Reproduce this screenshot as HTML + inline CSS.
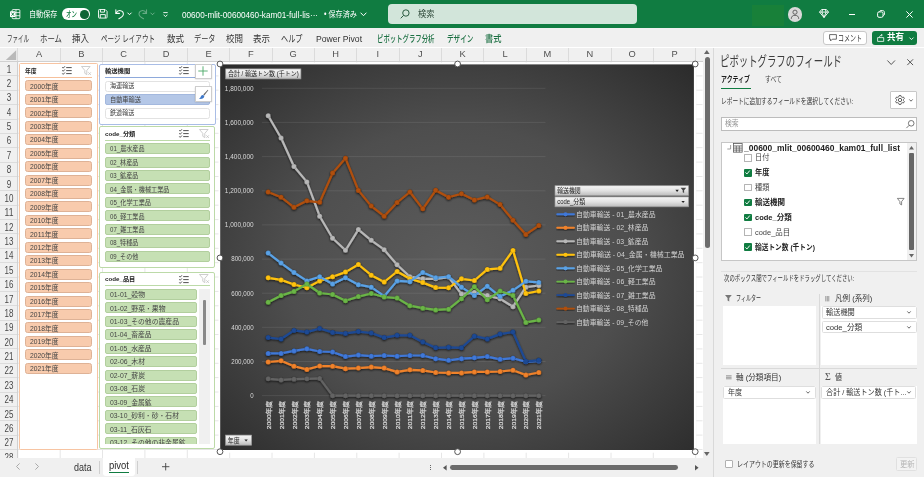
<!DOCTYPE html>
<html lang="ja"><head><meta charset="utf-8"><title>Excel</title><style>
html,body{margin:0;padding:0}
body{width:924px;height:477px;overflow:hidden;background:#fff;font-family:"Liberation Sans","Noto Sans CJK JP",sans-serif;position:relative}
.t{position:absolute;white-space:nowrap;transform-origin:0 50%}
.root{position:absolute;left:0;top:0;width:924px;height:477px;overflow:hidden;will-change:transform}
.b{position:absolute;box-sizing:border-box}
svg{position:absolute;overflow:visible}
</style></head>
<body>
<div class="root">
<div class="b" style="left:0.0px;top:0.0px;width:924.0px;height:28.4px;background:#107c41"></div>
<svg style="left:9.500px;top:9px" width="10.300" height="10.300" viewBox="0 0 12 12"><rect x="2.5" y="0.7" width="9" height="10.6" rx="1" fill="none" stroke="#fff" stroke-width="1"/><path d="M7 .7v10.6M2.5 4.2h9M2.5 7.8h9" stroke="#fff" stroke-width=".9" fill="none"/><rect x="0" y="2.6" width="6.4" height="6.8" rx=".8" fill="#fff"/><path d="M1.7 4.2l3 3.6M4.7 4.2l-3 3.6" stroke="#107c41" stroke-width="1.1" fill="none"/></svg>
<span class="t" style="left:29.0px;top:8.0px;font-size:8.5px;line-height:12px;color:#fff;transform:scaleX(0.838);">自動保存</span>
<div class="b" style="left:61.7px;top:8.4px;width:28.3px;height:11.6px;background:#fff;border-radius:6px"></div>
<span class="t" style="left:65.8px;top:8.7px;font-size:8px;line-height:11px;color:#107c41;font-weight:500;transform:scaleX(0.688);">オン</span>
<div class="b" style="left:80.2px;top:10.0px;width:8.5px;height:8.5px;background:#0e6535;border-radius:50%"></div>
<svg style="left:97.600px;top:9.300px" width="9.600" height="9.600" viewBox="0 0 11 11" fill="none" stroke="#fff" stroke-width="1.050"><path d="M.6 1.6a1 1 0 0 1 1-1h6.6l2.2 2.2v6.6a1 1 0 0 1-1 1H1.6a1 1 0 0 1-1-1z"/><path d="M2.8.8v2.8h4.6V.8M2.6 10.3V6.4h5.8v3.9"/></svg>
<svg style="left:114.800px;top:8.900px" width="9.400" height="10.300" viewBox="0 0 11 12" fill="none" stroke="#fff" stroke-width="1.200" stroke-linecap="round" stroke-linejoin="round"><path d="M1 .9v4.2h4.2"/><path d="M1.2 5C2.3 2.6 4.4 1.6 6.4 1.9c2.2.4 3.5 2.2 3.4 4.2-.1 2.300-2.500 3.800-5.300 5.200"/></svg>
<svg style="left:127px;top:11.800px" width="5" height="4" viewBox="0 0 5 4" fill="none" stroke="#fff" stroke-width="1"><path d="M.5.7l2 2 2-2"/></svg>
<svg style="left:137.800px;top:8.900px;opacity:.36" width="9.400" height="10.300" viewBox="0 0 11 12" fill="none" stroke="#fff" stroke-width="1.200" stroke-linecap="round" stroke-linejoin="round"><path d="M10 .9v4.2H5.800"/><path d="M9.800 5C8.700 2.600 6.600 1.600 4.600 1.900 2.400 2.300 1.100 4.100 1.200 6.100c.1 2.300 2.500 3.800 5.300 5.200"/></svg>
<svg style="left:150.200px;top:11.800px;opacity:.36" width="5" height="4" viewBox="0 0 5 4" fill="none" stroke="#fff" stroke-width="1"><path d="M.5.700l2 2 2-2"/></svg>
<svg style="left:162.500px;top:11.800px" width="5" height="6" viewBox="0 0 5 6" fill="none" stroke="#fff" stroke-width=".9"><path d="M.3.600h4.400M.6 2.700l1.900 2 1.900-2"/></svg>
<span class="t" style="left:182.0px;top:7.5px;font-size:9.5px;line-height:13px;color:#fff;transform:scaleX(0.859);">00600-mlit-00600460-kam01-full-lis···</span>
<span class="t" style="left:324.0px;top:8.0px;font-size:8.5px;line-height:12px;color:#fff;transform:scaleX(0.839);">• 保存済み</span>
<svg style="left:359.500px;top:12px" width="7" height="5" viewBox="0 0 7 5" fill="none" stroke="#fff" stroke-width="1"><path d="M.6.700l2.900 3 2.900-3"/></svg>
<div class="b" style="left:388.2px;top:4.4px;width:248.8px;height:19.8px;background:#d2e5da;border-radius:4px"></div>
<svg style="left:399.500px;top:9px" width="10" height="10" viewBox="0 0 10 10" fill="none" stroke="#2a5a40" stroke-width="1"><circle cx="5.900" cy="4" r="3.200"/><path d="M3.600 6.400L.7 9.300"/></svg>
<span class="t" style="left:418.0px;top:7.7px;font-size:9px;line-height:13px;color:#2f4a3a;transform:scaleX(0.916);">検索</span>
<div class="b" style="left:752.0px;top:5.0px;width:31.5px;height:21.0px;background:#188039"></div>
<div class="b" style="left:787.6px;top:6.9px;width:14.8px;height:14.8px;background:#d9d9d9;border-radius:50%"></div>
<svg style="left:790px;top:9px" width="10" height="11" viewBox="0 0 10 11" fill="none" stroke="#555" stroke-width=".9"><circle cx="5" cy="3.200" r="2.100"/><path d="M1.300 9.800c0-2.300 1.400-3.500 3.700-3.500s3.700 1.200 3.700 3.500"/></svg>
<svg style="left:818.500px;top:9px" width="10" height="9" viewBox="0 0 10 9" fill="none" stroke="#fff" stroke-width=".9" stroke-linejoin="round"><path d="M2.600.5h4.800l2.100 2.600L5 8.500.5 3.100z"/><path d="M.5 3.100h9M3.600.5L2.900 3.100 5 8.500l2.100-5.400L6.400.5"/></svg>
<div class="b" style="left:848.5px;top:13.5px;width:6.5px;height:1.2px;background:#fff"></div>
<svg style="left:877px;top:10px" width="8" height="8" viewBox="0 0 8 8" fill="none" stroke="#fff" stroke-width="1"><rect x=".6" y="1.900" width="5.400" height="5.400" rx="1.400"/><path d="M2.300 1.700C2.600.9 3.200.6 4 .6h1.700c1 0 1.700.7 1.700 1.700V4c0 .8-.4 1.400-1.100 1.700"/></svg>
<svg style="left:906px;top:10.500px" width="7" height="7" viewBox="0 0 7 7" fill="none" stroke="#fff" stroke-width="1"><path d="M.4.400l6.200 6.200M6.600.4L.4 6.600"/></svg>
<div class="b" style="left:0.0px;top:28.4px;width:924.0px;height:19.1px;background:#f0f0f0"></div>
<span class="t" style="left:7.3px;top:31.5px;font-size:9.5px;line-height:13px;color:#333;transform:scaleX(0.579);">ファイル</span>
<span class="t" style="left:40.0px;top:31.5px;font-size:9.5px;line-height:13px;color:#333;transform:scaleX(0.780);">ホーム</span>
<span class="t" style="left:72.0px;top:31.5px;font-size:9.5px;line-height:13px;color:#333;transform:scaleX(0.894);">挿入</span>
<span class="t" style="left:101.0px;top:31.5px;font-size:9.5px;line-height:13px;color:#333;transform:scaleX(0.688);">ページ レイアウト</span>
<span class="t" style="left:167.0px;top:31.5px;font-size:9.5px;line-height:13px;color:#333;transform:scaleX(0.894);">数式</span>
<span class="t" style="left:194.0px;top:31.5px;font-size:9.5px;line-height:13px;color:#333;transform:scaleX(0.754);">データ</span>
<span class="t" style="left:226.0px;top:31.5px;font-size:9.5px;line-height:13px;color:#333;transform:scaleX(0.894);">校閲</span>
<span class="t" style="left:253.0px;top:31.5px;font-size:9.5px;line-height:13px;color:#333;transform:scaleX(0.894);">表示</span>
<span class="t" style="left:281.0px;top:31.5px;font-size:9.5px;line-height:13px;color:#333;transform:scaleX(0.754);">ヘルプ</span>
<span class="t" style="left:315.5px;top:31.5px;font-size:9.5px;line-height:13px;color:#333;transform:scaleX(0.908);">Power Pivot</span>
<span class="t" style="left:377.0px;top:31.5px;font-size:9.5px;line-height:13px;color:#1e7145;font-weight:500;transform:scaleX(0.672);">ピボットグラフ分析</span>
<span class="t" style="left:447.0px;top:31.5px;font-size:9.5px;line-height:13px;color:#1e7145;font-weight:500;transform:scaleX(0.697);">デザイン</span>
<span class="t" style="left:485.0px;top:31.5px;font-size:9.5px;line-height:13px;color:#1e7145;font-weight:500;transform:scaleX(0.868);">書式</span>
<div class="b" style="left:823.3px;top:30.5px;width:43.6px;height:14.5px;background:#fff;border:1px solid #c8c8c8;border-radius:3px"></div>
<svg style="left:828.500px;top:34px" width="8" height="8" viewBox="0 0 8 8" fill="none" stroke="#444" stroke-width=".8" stroke-linejoin="round"><path d="M.6.600h6.800v4.600H3.300L1.600 6.900V5.200H.6z"/></svg>
<span class="t" style="left:838.0px;top:31.8px;font-size:8.5px;line-height:12px;color:#333;transform:scaleX(0.706);">コメント</span>
<div class="b" style="left:872.0px;top:30.5px;width:45.0px;height:14.5px;background:#107c41;border-radius:3px"></div>
<svg style="left:876.500px;top:33.500px" width="8" height="8" viewBox="0 0 8 8" fill="none" stroke="#fff" stroke-width=".8" stroke-linejoin="round"><path d="M.6 3.600h4.300l1.800 0v3.800H.6z"/><path d="M2.400 3.400C2.600 1.800 3.700 1.100 5.100 1.100M4.200.3l1.100.8-1.100.9"/></svg>
<span class="t" style="left:887.0px;top:31.3px;font-size:9px;line-height:13px;color:#fff;font-weight:700;transform:scaleX(0.944);">共有</span>
<svg style="left:908.500px;top:36.500px" width="5" height="4" viewBox="0 0 5 4" fill="none" stroke="#fff" stroke-width=".9"><path d="M.5.600l2 2 2-2"/></svg>
<div class="b" style="left:0.0px;top:47.5px;width:702.5px;height:410.0px;background:#fff"></div>
<svg style="left:0;top:0" width="703" height="458" viewBox="0 0 703 458"><path d="M17.8 61.500V458M60.2 61.500V458M102.5 61.500V458M144.9 61.500V458M187.3 61.500V458M229.7 61.500V458M272.0 61.500V458M314.4 61.500V458M356.8 61.500V458M399.1 61.500V458M441.5 61.500V458M483.9 61.500V458M526.2 61.500V458M568.6 61.500V458M611.0 61.500V458M653.3 61.500V458M695.7 61.500V458M17.800 61.5H702.500M17.800 75.9H702.500M17.800 90.2H702.500M17.800 104.6H702.500M17.800 119.0H702.500M17.800 133.3H702.500M17.800 147.7H702.500M17.800 162.1H702.500M17.800 176.5H702.500M17.800 190.8H702.500M17.800 205.2H702.500M17.800 219.6H702.500M17.800 233.9H702.500M17.800 248.3H702.500M17.800 262.7H702.500M17.800 277.0H702.500M17.800 291.4H702.500M17.800 305.8H702.500M17.800 320.2H702.500M17.800 334.5H702.500M17.800 348.9H702.500M17.800 363.3H702.500M17.800 377.6H702.500M17.800 392.0H702.500M17.800 406.4H702.500M17.800 420.8H702.500M17.800 435.1H702.500M17.800 449.5H702.500" stroke="#e6e6e6" stroke-width="1" fill="none"/></svg>
<div class="b" style="left:0.0px;top:47.5px;width:702.5px;height:14.0px;background:#f0f0f0;border-bottom:1px solid #d0d0d0"></div>
<svg style="left:0;top:47.500px" width="18" height="14" viewBox="0 0 18 14"><path d="M16.200 2.200v9.800H5.800z" fill="#b9b9b9"/></svg>
<span class="t" style="left:39.0px;top:48.0px;font-size:9.3px;line-height:13px;color:#505050;transform-origin:50% 50%;transform:translateX(-50%);">A</span>
<div class="b" style="left:59.7px;top:48.0px;width:1.0px;height:13.0px;background:#dbdbdb"></div>
<span class="t" style="left:81.4px;top:48.0px;font-size:9.3px;line-height:13px;color:#505050;transform-origin:50% 50%;transform:translateX(-50%);">B</span>
<div class="b" style="left:102.0px;top:48.0px;width:1.0px;height:13.0px;background:#dbdbdb"></div>
<span class="t" style="left:123.7px;top:48.0px;font-size:9.3px;line-height:13px;color:#505050;transform-origin:50% 50%;transform:translateX(-50%);">C</span>
<div class="b" style="left:144.4px;top:48.0px;width:1.0px;height:13.0px;background:#dbdbdb"></div>
<span class="t" style="left:166.1px;top:48.0px;font-size:9.3px;line-height:13px;color:#505050;transform-origin:50% 50%;transform:translateX(-50%);">D</span>
<div class="b" style="left:186.8px;top:48.0px;width:1.0px;height:13.0px;background:#dbdbdb"></div>
<span class="t" style="left:208.5px;top:48.0px;font-size:9.3px;line-height:13px;color:#505050;transform-origin:50% 50%;transform:translateX(-50%);">E</span>
<div class="b" style="left:229.2px;top:48.0px;width:1.0px;height:13.0px;background:#dbdbdb"></div>
<span class="t" style="left:250.8px;top:48.0px;font-size:9.3px;line-height:13px;color:#505050;transform-origin:50% 50%;transform:translateX(-50%);">F</span>
<div class="b" style="left:271.5px;top:48.0px;width:1.0px;height:13.0px;background:#dbdbdb"></div>
<span class="t" style="left:293.2px;top:48.0px;font-size:9.3px;line-height:13px;color:#505050;transform-origin:50% 50%;transform:translateX(-50%);">G</span>
<div class="b" style="left:313.9px;top:48.0px;width:1.0px;height:13.0px;background:#dbdbdb"></div>
<span class="t" style="left:335.6px;top:48.0px;font-size:9.3px;line-height:13px;color:#505050;transform-origin:50% 50%;transform:translateX(-50%);">H</span>
<div class="b" style="left:356.3px;top:48.0px;width:1.0px;height:13.0px;background:#dbdbdb"></div>
<span class="t" style="left:377.9px;top:48.0px;font-size:9.3px;line-height:13px;color:#505050;transform-origin:50% 50%;transform:translateX(-50%);">I</span>
<div class="b" style="left:398.6px;top:48.0px;width:1.0px;height:13.0px;background:#dbdbdb"></div>
<span class="t" style="left:420.3px;top:48.0px;font-size:9.3px;line-height:13px;color:#505050;transform-origin:50% 50%;transform:translateX(-50%);">J</span>
<div class="b" style="left:441.0px;top:48.0px;width:1.0px;height:13.0px;background:#dbdbdb"></div>
<span class="t" style="left:462.7px;top:48.0px;font-size:9.3px;line-height:13px;color:#505050;transform-origin:50% 50%;transform:translateX(-50%);">K</span>
<div class="b" style="left:483.4px;top:48.0px;width:1.0px;height:13.0px;background:#dbdbdb"></div>
<span class="t" style="left:505.1px;top:48.0px;font-size:9.3px;line-height:13px;color:#505050;transform-origin:50% 50%;transform:translateX(-50%);">L</span>
<div class="b" style="left:525.7px;top:48.0px;width:1.0px;height:13.0px;background:#dbdbdb"></div>
<span class="t" style="left:547.4px;top:48.0px;font-size:9.3px;line-height:13px;color:#505050;transform-origin:50% 50%;transform:translateX(-50%);">M</span>
<div class="b" style="left:568.1px;top:48.0px;width:1.0px;height:13.0px;background:#dbdbdb"></div>
<span class="t" style="left:589.8px;top:48.0px;font-size:9.3px;line-height:13px;color:#505050;transform-origin:50% 50%;transform:translateX(-50%);">N</span>
<div class="b" style="left:610.5px;top:48.0px;width:1.0px;height:13.0px;background:#dbdbdb"></div>
<span class="t" style="left:632.2px;top:48.0px;font-size:9.3px;line-height:13px;color:#505050;transform-origin:50% 50%;transform:translateX(-50%);">O</span>
<div class="b" style="left:652.8px;top:48.0px;width:1.0px;height:13.0px;background:#dbdbdb"></div>
<span class="t" style="left:674.5px;top:48.0px;font-size:9.3px;line-height:13px;color:#505050;transform-origin:50% 50%;transform:translateX(-50%);">P</span>
<div class="b" style="left:695.2px;top:48.0px;width:1.0px;height:13.0px;background:#dbdbdb"></div>
<div class="b" style="left:17.3px;top:48.0px;width:1.0px;height:13.0px;background:#dbdbdb"></div>
<div class="b" style="left:0.0px;top:61.5px;width:17.8px;height:396.5px;background:#f0f0f0;border-right:1px solid #d0d0d0"></div>
<span class="t" style="left:9.0px;top:62.6px;font-size:10.3px;line-height:14px;color:#484848;transform-origin:50% 50%;transform:translateX(-50%) scaleX(0.785);">1</span>
<div class="b" style="left:0.0px;top:75.4px;width:17.3px;height:1.0px;background:#dcdcdc"></div>
<span class="t" style="left:9.0px;top:77.0px;font-size:10.3px;line-height:14px;color:#484848;transform-origin:50% 50%;transform:translateX(-50%) scaleX(0.785);">2</span>
<div class="b" style="left:0.0px;top:89.7px;width:17.3px;height:1.0px;background:#dcdcdc"></div>
<span class="t" style="left:9.0px;top:91.3px;font-size:10.3px;line-height:14px;color:#484848;transform-origin:50% 50%;transform:translateX(-50%) scaleX(0.785);">3</span>
<div class="b" style="left:0.0px;top:104.1px;width:17.3px;height:1.0px;background:#dcdcdc"></div>
<span class="t" style="left:9.0px;top:105.7px;font-size:10.3px;line-height:14px;color:#484848;transform-origin:50% 50%;transform:translateX(-50%) scaleX(0.785);">4</span>
<div class="b" style="left:0.0px;top:118.5px;width:17.3px;height:1.0px;background:#dcdcdc"></div>
<span class="t" style="left:9.0px;top:120.1px;font-size:10.3px;line-height:14px;color:#484848;transform-origin:50% 50%;transform:translateX(-50%) scaleX(0.785);">5</span>
<div class="b" style="left:0.0px;top:132.8px;width:17.3px;height:1.0px;background:#dcdcdc"></div>
<span class="t" style="left:9.0px;top:134.4px;font-size:10.3px;line-height:14px;color:#484848;transform-origin:50% 50%;transform:translateX(-50%) scaleX(0.785);">6</span>
<div class="b" style="left:0.0px;top:147.2px;width:17.3px;height:1.0px;background:#dcdcdc"></div>
<span class="t" style="left:9.0px;top:148.8px;font-size:10.3px;line-height:14px;color:#484848;transform-origin:50% 50%;transform:translateX(-50%) scaleX(0.785);">7</span>
<div class="b" style="left:0.0px;top:161.6px;width:17.3px;height:1.0px;background:#dcdcdc"></div>
<span class="t" style="left:9.0px;top:163.2px;font-size:10.3px;line-height:14px;color:#484848;transform-origin:50% 50%;transform:translateX(-50%) scaleX(0.785);">8</span>
<div class="b" style="left:0.0px;top:176.0px;width:17.3px;height:1.0px;background:#dcdcdc"></div>
<span class="t" style="left:9.0px;top:177.6px;font-size:10.3px;line-height:14px;color:#484848;transform-origin:50% 50%;transform:translateX(-50%) scaleX(0.785);">9</span>
<div class="b" style="left:0.0px;top:190.3px;width:17.3px;height:1.0px;background:#dcdcdc"></div>
<span class="t" style="left:9.0px;top:191.9px;font-size:10.3px;line-height:14px;color:#484848;transform-origin:50% 50%;transform:translateX(-50%) scaleX(0.776);">10</span>
<div class="b" style="left:0.0px;top:204.7px;width:17.3px;height:1.0px;background:#dcdcdc"></div>
<span class="t" style="left:9.0px;top:206.3px;font-size:10.3px;line-height:14px;color:#484848;transform-origin:50% 50%;transform:translateX(-50%) scaleX(0.832);">11</span>
<div class="b" style="left:0.0px;top:219.1px;width:17.3px;height:1.0px;background:#dcdcdc"></div>
<span class="t" style="left:9.0px;top:220.7px;font-size:10.3px;line-height:14px;color:#484848;transform-origin:50% 50%;transform:translateX(-50%) scaleX(0.776);">12</span>
<div class="b" style="left:0.0px;top:233.4px;width:17.3px;height:1.0px;background:#dcdcdc"></div>
<span class="t" style="left:9.0px;top:235.0px;font-size:10.3px;line-height:14px;color:#484848;transform-origin:50% 50%;transform:translateX(-50%) scaleX(0.776);">13</span>
<div class="b" style="left:0.0px;top:247.8px;width:17.3px;height:1.0px;background:#dcdcdc"></div>
<span class="t" style="left:9.0px;top:249.4px;font-size:10.3px;line-height:14px;color:#484848;transform-origin:50% 50%;transform:translateX(-50%) scaleX(0.776);">14</span>
<div class="b" style="left:0.0px;top:262.2px;width:17.3px;height:1.0px;background:#dcdcdc"></div>
<span class="t" style="left:9.0px;top:263.8px;font-size:10.3px;line-height:14px;color:#484848;transform-origin:50% 50%;transform:translateX(-50%) scaleX(0.776);">15</span>
<div class="b" style="left:0.0px;top:276.5px;width:17.3px;height:1.0px;background:#dcdcdc"></div>
<span class="t" style="left:9.0px;top:278.1px;font-size:10.3px;line-height:14px;color:#484848;transform-origin:50% 50%;transform:translateX(-50%) scaleX(0.776);">16</span>
<div class="b" style="left:0.0px;top:290.9px;width:17.3px;height:1.0px;background:#dcdcdc"></div>
<span class="t" style="left:9.0px;top:292.5px;font-size:10.3px;line-height:14px;color:#484848;transform-origin:50% 50%;transform:translateX(-50%) scaleX(0.776);">17</span>
<div class="b" style="left:0.0px;top:305.3px;width:17.3px;height:1.0px;background:#dcdcdc"></div>
<span class="t" style="left:9.0px;top:306.9px;font-size:10.3px;line-height:14px;color:#484848;transform-origin:50% 50%;transform:translateX(-50%) scaleX(0.776);">18</span>
<div class="b" style="left:0.0px;top:319.7px;width:17.3px;height:1.0px;background:#dcdcdc"></div>
<span class="t" style="left:9.0px;top:321.3px;font-size:10.3px;line-height:14px;color:#484848;transform-origin:50% 50%;transform:translateX(-50%) scaleX(0.776);">19</span>
<div class="b" style="left:0.0px;top:334.0px;width:17.3px;height:1.0px;background:#dcdcdc"></div>
<span class="t" style="left:9.0px;top:335.6px;font-size:10.3px;line-height:14px;color:#484848;transform-origin:50% 50%;transform:translateX(-50%) scaleX(0.776);">20</span>
<div class="b" style="left:0.0px;top:348.4px;width:17.3px;height:1.0px;background:#dcdcdc"></div>
<span class="t" style="left:9.0px;top:350.0px;font-size:10.3px;line-height:14px;color:#484848;transform-origin:50% 50%;transform:translateX(-50%) scaleX(0.776);">21</span>
<div class="b" style="left:0.0px;top:362.8px;width:17.3px;height:1.0px;background:#dcdcdc"></div>
<span class="t" style="left:9.0px;top:364.4px;font-size:10.3px;line-height:14px;color:#484848;transform-origin:50% 50%;transform:translateX(-50%) scaleX(0.776);">22</span>
<div class="b" style="left:0.0px;top:377.1px;width:17.3px;height:1.0px;background:#dcdcdc"></div>
<span class="t" style="left:9.0px;top:378.7px;font-size:10.3px;line-height:14px;color:#484848;transform-origin:50% 50%;transform:translateX(-50%) scaleX(0.776);">23</span>
<div class="b" style="left:0.0px;top:391.5px;width:17.3px;height:1.0px;background:#dcdcdc"></div>
<span class="t" style="left:9.0px;top:393.1px;font-size:10.3px;line-height:14px;color:#484848;transform-origin:50% 50%;transform:translateX(-50%) scaleX(0.776);">24</span>
<div class="b" style="left:0.0px;top:405.9px;width:17.3px;height:1.0px;background:#dcdcdc"></div>
<span class="t" style="left:9.0px;top:407.5px;font-size:10.3px;line-height:14px;color:#484848;transform-origin:50% 50%;transform:translateX(-50%) scaleX(0.776);">25</span>
<div class="b" style="left:0.0px;top:420.2px;width:17.3px;height:1.0px;background:#dcdcdc"></div>
<span class="t" style="left:9.0px;top:421.8px;font-size:10.3px;line-height:14px;color:#484848;transform-origin:50% 50%;transform:translateX(-50%) scaleX(0.776);">26</span>
<div class="b" style="left:0.0px;top:434.6px;width:17.3px;height:1.0px;background:#dcdcdc"></div>
<span class="t" style="left:9.0px;top:436.2px;font-size:10.3px;line-height:14px;color:#484848;transform-origin:50% 50%;transform:translateX(-50%) scaleX(0.776);">27</span>
<div class="b" style="left:0.0px;top:449.0px;width:17.3px;height:1.0px;background:#dcdcdc"></div>
<div class="b" style="left:0;top:449.5px;width:17.800px;height:8.5px;overflow:hidden"><span class="t" style="left:9.0px;top:1.1px;font-size:10.3px;line-height:14px;color:#484848;transform-origin:50% 50%;transform:translateX(-50%) scaleX(0.776);">28</span></div>
<div class="b" style="left:0.0px;top:463.4px;width:17.3px;height:1.0px;background:#dcdcdc"></div>
<div class="b" style="left:19.0px;top:63.3px;width:79.0px;height:386.7px;background:#fff;border:1px solid #f7c4a2;border-radius:1.500px"></div>
<span class="t" style="left:24.8px;top:65.7px;font-size:6.1px;line-height:9px;color:#222;font-weight:700;transform:scaleX(0.960);">年度</span>
<svg style="left:61.5px;top:66.2px" width="10" height="9" viewBox="0 0 10 8.400" preserveAspectRatio="none" fill="none" stroke="#3a3a3a" stroke-width=".85"><path d="M.3 1.100l.9.900L2.900.3M.3 4l.9.900L2.900 3.200M.3 6.900l.9.900 1.700-1.700M4.200 1.500h5.500M4.200 4.300h5.500M4.200 7.100h5.500"/></svg>
<svg style="left:81.0px;top:66.0px" width="11" height="9.500" viewBox="0 0 11 9.500" fill="none" stroke="#bdbdbd" stroke-width=".75"><path d="M.5.500h8.600L5.800 4.400v4.200L3.800 7.300V4.400z"/><path d="M7.300 6.300l2.600 2.600M9.900 6.300L7.300 8.900"/></svg>
<div class="b" style="left:24.6px;top:76.8px;width:67.6px;height:1.0px;background:#f6c09b"></div>
<div class="b" style="left:24.6px;top:80.4px;width:67.6px;height:11.1px;background:#f8cbad;border:1px solid #deb296;border-radius:2.500px"></div>
<span class="t" style="left:29.7px;top:81.6px;font-size:6.7px;line-height:9px;color:#444;transform:scaleX(1.008);">2000年度</span>
<div class="b" style="left:24.6px;top:93.8px;width:67.6px;height:11.1px;background:#f8cbad;border:1px solid #deb296;border-radius:2.500px"></div>
<span class="t" style="left:29.7px;top:95.0px;font-size:6.7px;line-height:9px;color:#444;transform:scaleX(1.008);">2001年度</span>
<div class="b" style="left:24.6px;top:107.3px;width:67.6px;height:11.1px;background:#f8cbad;border:1px solid #deb296;border-radius:2.500px"></div>
<span class="t" style="left:29.7px;top:108.5px;font-size:6.7px;line-height:9px;color:#444;transform:scaleX(1.008);">2002年度</span>
<div class="b" style="left:24.6px;top:120.7px;width:67.6px;height:11.1px;background:#f8cbad;border:1px solid #deb296;border-radius:2.500px"></div>
<span class="t" style="left:29.7px;top:121.9px;font-size:6.7px;line-height:9px;color:#444;transform:scaleX(1.008);">2003年度</span>
<div class="b" style="left:24.6px;top:134.2px;width:67.6px;height:11.1px;background:#f8cbad;border:1px solid #deb296;border-radius:2.500px"></div>
<span class="t" style="left:29.7px;top:135.4px;font-size:6.7px;line-height:9px;color:#444;transform:scaleX(1.008);">2004年度</span>
<div class="b" style="left:24.6px;top:147.6px;width:67.6px;height:11.1px;background:#f8cbad;border:1px solid #deb296;border-radius:2.500px"></div>
<span class="t" style="left:29.7px;top:148.8px;font-size:6.7px;line-height:9px;color:#444;transform:scaleX(1.008);">2005年度</span>
<div class="b" style="left:24.6px;top:161.1px;width:67.6px;height:11.1px;background:#f8cbad;border:1px solid #deb296;border-radius:2.500px"></div>
<span class="t" style="left:29.7px;top:162.3px;font-size:6.7px;line-height:9px;color:#444;transform:scaleX(1.008);">2006年度</span>
<div class="b" style="left:24.6px;top:174.5px;width:67.6px;height:11.1px;background:#f8cbad;border:1px solid #deb296;border-radius:2.500px"></div>
<span class="t" style="left:29.7px;top:175.7px;font-size:6.7px;line-height:9px;color:#444;transform:scaleX(1.008);">2007年度</span>
<div class="b" style="left:24.6px;top:188.0px;width:67.6px;height:11.1px;background:#f8cbad;border:1px solid #deb296;border-radius:2.500px"></div>
<span class="t" style="left:29.7px;top:189.2px;font-size:6.7px;line-height:9px;color:#444;transform:scaleX(1.008);">2008年度</span>
<div class="b" style="left:24.6px;top:201.4px;width:67.6px;height:11.1px;background:#f8cbad;border:1px solid #deb296;border-radius:2.500px"></div>
<span class="t" style="left:29.7px;top:202.6px;font-size:6.7px;line-height:9px;color:#444;transform:scaleX(1.008);">2009年度</span>
<div class="b" style="left:24.6px;top:214.8px;width:67.6px;height:11.1px;background:#f8cbad;border:1px solid #deb296;border-radius:2.500px"></div>
<span class="t" style="left:29.7px;top:216.0px;font-size:6.7px;line-height:9px;color:#444;transform:scaleX(1.008);">2010年度</span>
<div class="b" style="left:24.6px;top:228.3px;width:67.6px;height:11.1px;background:#f8cbad;border:1px solid #deb296;border-radius:2.500px"></div>
<span class="t" style="left:29.7px;top:229.5px;font-size:6.7px;line-height:9px;color:#444;transform:scaleX(1.026);">2011年度</span>
<div class="b" style="left:24.6px;top:241.7px;width:67.6px;height:11.1px;background:#f8cbad;border:1px solid #deb296;border-radius:2.500px"></div>
<span class="t" style="left:29.7px;top:242.9px;font-size:6.7px;line-height:9px;color:#444;transform:scaleX(1.008);">2012年度</span>
<div class="b" style="left:24.6px;top:255.2px;width:67.6px;height:11.1px;background:#f8cbad;border:1px solid #deb296;border-radius:2.500px"></div>
<span class="t" style="left:29.7px;top:256.4px;font-size:6.7px;line-height:9px;color:#444;transform:scaleX(1.008);">2013年度</span>
<div class="b" style="left:24.6px;top:268.6px;width:67.6px;height:11.1px;background:#f8cbad;border:1px solid #deb296;border-radius:2.500px"></div>
<span class="t" style="left:29.7px;top:269.8px;font-size:6.7px;line-height:9px;color:#444;transform:scaleX(1.008);">2014年度</span>
<div class="b" style="left:24.6px;top:282.1px;width:67.6px;height:11.1px;background:#f8cbad;border:1px solid #deb296;border-radius:2.500px"></div>
<span class="t" style="left:29.7px;top:283.3px;font-size:6.7px;line-height:9px;color:#444;transform:scaleX(1.008);">2015年度</span>
<div class="b" style="left:24.6px;top:295.5px;width:67.6px;height:11.1px;background:#f8cbad;border:1px solid #deb296;border-radius:2.500px"></div>
<span class="t" style="left:29.7px;top:296.7px;font-size:6.7px;line-height:9px;color:#444;transform:scaleX(1.008);">2016年度</span>
<div class="b" style="left:24.6px;top:309.0px;width:67.6px;height:11.1px;background:#f8cbad;border:1px solid #deb296;border-radius:2.500px"></div>
<span class="t" style="left:29.7px;top:310.2px;font-size:6.7px;line-height:9px;color:#444;transform:scaleX(1.008);">2017年度</span>
<div class="b" style="left:24.6px;top:322.4px;width:67.6px;height:11.1px;background:#f8cbad;border:1px solid #deb296;border-radius:2.500px"></div>
<span class="t" style="left:29.7px;top:323.6px;font-size:6.7px;line-height:9px;color:#444;transform:scaleX(1.008);">2018年度</span>
<div class="b" style="left:24.6px;top:335.9px;width:67.6px;height:11.1px;background:#f8cbad;border:1px solid #deb296;border-radius:2.500px"></div>
<span class="t" style="left:29.7px;top:337.1px;font-size:6.7px;line-height:9px;color:#444;transform:scaleX(1.008);">2019年度</span>
<div class="b" style="left:24.6px;top:349.3px;width:67.6px;height:11.1px;background:#f8cbad;border:1px solid #deb296;border-radius:2.500px"></div>
<span class="t" style="left:29.7px;top:350.5px;font-size:6.7px;line-height:9px;color:#444;transform:scaleX(1.008);">2020年度</span>
<div class="b" style="left:24.6px;top:362.7px;width:67.6px;height:11.1px;background:#f8cbad;border:1px solid #deb296;border-radius:2.500px"></div>
<span class="t" style="left:29.7px;top:363.9px;font-size:6.7px;line-height:9px;color:#444;transform:scaleX(1.008);">2021年度</span>
<div class="b" style="left:99.4px;top:63.6px;width:116.4px;height:61.6px;background:#fff;border:1px solid #a9bde6;border-radius:2px"></div>
<span class="t" style="left:105.0px;top:66.1px;font-size:6.1px;line-height:9px;color:#222;font-weight:700;transform:scaleX(1.034);">輸送機関</span>
<svg style="left:179.4px;top:66.2px" width="10" height="9" viewBox="0 0 10 8.400" preserveAspectRatio="none" fill="none" stroke="#3a3a3a" stroke-width=".85"><path d="M.3 1.100l.9.900L2.900.3M.3 4l.9.900L2.900 3.200M.3 6.900l.9.900 1.700-1.700M4.200 1.500h5.500M4.200 4.300h5.500M4.200 7.100h5.500"/></svg>
<div class="b" style="left:105.0px;top:77.1px;width:105.0px;height:1.0px;background:#8ea9db"></div>
<div class="b" style="left:105.0px;top:80.8px;width:104.5px;height:11.1px;background:#fff;border:1px solid #e2e2e2;border-radius:2.500px"></div>
<span class="t" style="left:110.4px;top:81.3px;font-size:6.4px;line-height:9px;color:#444;transform:scaleX(0.958);">海運輸送</span>
<div class="b" style="left:105.0px;top:94.3px;width:104.5px;height:11.1px;background:#b4c7e7;border:1px solid #a3b8de;border-radius:2px"></div>
<span class="t" style="left:110.4px;top:94.8px;font-size:6.4px;line-height:9px;color:#444;transform:scaleX(0.964);">自動車輸送</span>
<div class="b" style="left:105.0px;top:107.7px;width:104.5px;height:11.1px;background:#fff;border:1px solid #e2e2e2;border-radius:2.500px"></div>
<span class="t" style="left:110.4px;top:108.2px;font-size:6.4px;line-height:9px;color:#444;transform:scaleX(0.958);">鉄道輸送</span>
<div class="b" style="left:195.0px;top:63.6px;width:16.5px;height:15.6px;background:#fff;border:1px solid #cdcdcd;box-shadow:0 .5px 1.500px rgba(0,0,0,.18)"></div>
<svg style="left:198.300px;top:66.400px" width="10" height="10" viewBox="0 0 10 10" fill="none" stroke="#4aa868" stroke-width=".9"><path d="M5 .3v9.400M.3 5h9.400"/></svg>
<div class="b" style="left:195.0px;top:86.0px;width:16.5px;height:16.3px;background:#fff;border:1px solid #cdcdcd;box-shadow:0 .5px 1.500px rgba(0,0,0,.18)"></div>
<svg style="left:197.700px;top:88.700px" width="11" height="11" viewBox="0 0 11 11"><path d="M9.800.8L5.300 5.600l1 .9L10.300 1.300z" fill="#6a6a6a"/><path d="M4.900 5.900C3.300 6 2.900 7.300 2.600 8.300 2.300 9 1.600 9.400.8 9.500c2.100.9 4.300.300 5.200-1.200.4-.7.400-1.300-.1-1.800z" fill="#3f78c9"/></svg>
<div class="b" style="left:99.4px;top:126.2px;width:116.0px;height:142.3px;background:#fff;border:1px solid #bcdaa8;border-radius:2px"></div>
<span class="t" style="left:105.0px;top:128.6px;font-size:6.1px;line-height:9px;color:#222;font-weight:700;transform:scaleX(1.016);">code_分類</span>
<svg style="left:179.4px;top:128.8px" width="10" height="9" viewBox="0 0 10 8.400" preserveAspectRatio="none" fill="none" stroke="#3a3a3a" stroke-width=".85"><path d="M.3 1.100l.9.900L2.900.3M.3 4l.9.900L2.900 3.200M.3 6.900l.9.900 1.700-1.700M4.200 1.500h5.500M4.200 4.300h5.500M4.200 7.100h5.500"/></svg>
<svg style="left:198.5px;top:128.6px" width="11" height="9.500" viewBox="0 0 11 9.500" fill="none" stroke="#bdbdbd" stroke-width=".75"><path d="M.5.500h8.600L5.800 4.400v4.200L3.800 7.300V4.400z"/><path d="M7.300 6.300l2.600 2.600M9.900 6.300L7.300 8.900"/></svg>
<div class="b" style="left:105.0px;top:139.5px;width:105.0px;height:1.0px;background:#bcdaa8"></div>
<div class="b" style="left:105.0px;top:143.1px;width:104.5px;height:11.1px;background:#c6e0b4;border:1px solid #b2cf9e;border-radius:2px"></div>
<span class="t" style="left:110.2px;top:144.3px;font-size:6.4px;line-height:9px;color:#444;transform:scaleX(0.952);">01_農水産品</span>
<div class="b" style="left:105.0px;top:156.5px;width:104.5px;height:11.1px;background:#c6e0b4;border:1px solid #b2cf9e;border-radius:2px"></div>
<span class="t" style="left:110.2px;top:157.7px;font-size:6.4px;line-height:9px;color:#444;transform:scaleX(0.948);">02_林産品</span>
<div class="b" style="left:105.0px;top:170.0px;width:104.5px;height:11.1px;background:#c6e0b4;border:1px solid #b2cf9e;border-radius:2px"></div>
<span class="t" style="left:110.2px;top:171.2px;font-size:6.4px;line-height:9px;color:#444;transform:scaleX(0.948);">03_鉱産品</span>
<div class="b" style="left:105.0px;top:183.4px;width:104.5px;height:11.1px;background:#c6e0b4;border:1px solid #b2cf9e;border-radius:2px"></div>
<span class="t" style="left:110.2px;top:184.6px;font-size:6.4px;line-height:9px;color:#444;transform:scaleX(0.963);">04_金属・機械工業品</span>
<div class="b" style="left:105.0px;top:196.9px;width:104.5px;height:11.1px;background:#c6e0b4;border:1px solid #b2cf9e;border-radius:2px"></div>
<span class="t" style="left:110.2px;top:198.1px;font-size:6.4px;line-height:9px;color:#444;transform:scaleX(0.962);">05_化学工業品</span>
<div class="b" style="left:105.0px;top:210.3px;width:104.5px;height:11.1px;background:#c6e0b4;border:1px solid #b2cf9e;border-radius:2px"></div>
<span class="t" style="left:110.2px;top:211.5px;font-size:6.4px;line-height:9px;color:#444;transform:scaleX(0.952);">06_軽工業品</span>
<div class="b" style="left:105.0px;top:223.7px;width:104.5px;height:11.1px;background:#c6e0b4;border:1px solid #b2cf9e;border-radius:2px"></div>
<span class="t" style="left:110.2px;top:224.9px;font-size:6.4px;line-height:9px;color:#444;transform:scaleX(0.952);">07_雑工業品</span>
<div class="b" style="left:105.0px;top:237.2px;width:104.5px;height:11.1px;background:#c6e0b4;border:1px solid #b2cf9e;border-radius:2px"></div>
<span class="t" style="left:110.2px;top:238.4px;font-size:6.4px;line-height:9px;color:#444;transform:scaleX(0.948);">08_特種品</span>
<div class="b" style="left:105.0px;top:250.6px;width:104.5px;height:11.1px;background:#c6e0b4;border:1px solid #b2cf9e;border-radius:2px"></div>
<span class="t" style="left:110.2px;top:251.8px;font-size:6.4px;line-height:9px;color:#444;transform:scaleX(0.948);">09_その他</span>
<div class="b" style="left:99.4px;top:271.7px;width:116.0px;height:177.8px;background:#fff;border:1px solid #bcdaa8;border-radius:2px"></div>
<span class="t" style="left:105.0px;top:274.4px;font-size:6.1px;line-height:9px;color:#222;font-weight:700;transform:scaleX(1.016);">code_品目</span>
<svg style="left:179.4px;top:274.5px" width="10" height="9" viewBox="0 0 10 8.400" preserveAspectRatio="none" fill="none" stroke="#3a3a3a" stroke-width=".85"><path d="M.3 1.100l.9.900L2.900.3M.3 4l.9.900L2.900 3.200M.3 6.900l.9.900 1.700-1.700M4.200 1.500h5.500M4.200 4.300h5.500M4.200 7.100h5.500"/></svg>
<svg style="left:198.5px;top:274.3px" width="11" height="9.500" viewBox="0 0 11 9.500" fill="none" stroke="#bdbdbd" stroke-width=".75"><path d="M.5.500h8.600L5.800 4.400v4.200L3.800 7.300V4.400z"/><path d="M7.300 6.300l2.600 2.600M9.900 6.300L7.300 8.900"/></svg>
<div class="b" style="left:105.0px;top:285.0px;width:105.0px;height:1.0px;background:#bcdaa8"></div>
<div class="b" style="left:105px;top:288.500px;width:92px;height:155.500px;overflow:hidden"><div class="b" style="left:0.0px;top:0.4px;width:91.5px;height:11.1px;background:#c6e0b4;border:1px solid #b2cf9e;border-radius:2px"></div><span class="t" style="left:5.2px;top:1.6px;font-size:6.4px;line-height:9px;color:#444;transform:scaleX(1.071);">01-01_穀物</span><div class="b" style="left:0.0px;top:13.8px;width:91.5px;height:11.1px;background:#c6e0b4;border:1px solid #b2cf9e;border-radius:2px"></div><span class="t" style="left:5.2px;top:15.0px;font-size:6.4px;line-height:9px;color:#444;transform:scaleX(1.070);">01-02_野菜・果物</span><div class="b" style="left:0.0px;top:27.3px;width:91.5px;height:11.1px;background:#c6e0b4;border:1px solid #b2cf9e;border-radius:2px"></div><span class="t" style="left:5.2px;top:28.5px;font-size:6.4px;line-height:9px;color:#444;transform:scaleX(1.067);">01-03_その他の農産品</span><div class="b" style="left:0.0px;top:40.7px;width:91.5px;height:11.1px;background:#c6e0b4;border:1px solid #b2cf9e;border-radius:2px"></div><span class="t" style="left:5.2px;top:41.9px;font-size:6.4px;line-height:9px;color:#444;transform:scaleX(1.062);">01-04_畜産品</span><div class="b" style="left:0.0px;top:54.2px;width:91.5px;height:11.1px;background:#c6e0b4;border:1px solid #b2cf9e;border-radius:2px"></div><span class="t" style="left:5.2px;top:55.4px;font-size:6.4px;line-height:9px;color:#444;transform:scaleX(1.062);">01-05_水産品</span><div class="b" style="left:0.0px;top:67.6px;width:91.5px;height:11.1px;background:#c6e0b4;border:1px solid #b2cf9e;border-radius:2px"></div><span class="t" style="left:5.2px;top:68.8px;font-size:6.4px;line-height:9px;color:#444;transform:scaleX(1.071);">02-06_木材</span><div class="b" style="left:0.0px;top:81.0px;width:91.5px;height:11.1px;background:#c6e0b4;border:1px solid #b2cf9e;border-radius:2px"></div><span class="t" style="left:5.2px;top:82.2px;font-size:6.4px;line-height:9px;color:#444;transform:scaleX(1.071);">02-07_薪炭</span><div class="b" style="left:0.0px;top:94.5px;width:91.5px;height:11.1px;background:#c6e0b4;border:1px solid #b2cf9e;border-radius:2px"></div><span class="t" style="left:5.2px;top:95.7px;font-size:6.4px;line-height:9px;color:#444;transform:scaleX(1.071);">03-08_石炭</span><div class="b" style="left:0.0px;top:107.9px;width:91.5px;height:11.1px;background:#c6e0b4;border:1px solid #b2cf9e;border-radius:2px"></div><span class="t" style="left:5.2px;top:109.1px;font-size:6.4px;line-height:9px;color:#444;transform:scaleX(1.062);">03-09_金属鉱</span><div class="b" style="left:0.0px;top:121.4px;width:91.5px;height:11.1px;background:#c6e0b4;border:1px solid #b2cf9e;border-radius:2px"></div><span class="t" style="left:5.2px;top:122.6px;font-size:6.4px;line-height:9px;color:#444;transform:scaleX(1.067);">03-10_砂利・砂・石材</span><div class="b" style="left:0.0px;top:134.8px;width:91.5px;height:11.1px;background:#c6e0b4;border:1px solid #b2cf9e;border-radius:2px"></div><span class="t" style="left:5.2px;top:136.0px;font-size:6.4px;line-height:9px;color:#444;transform:scaleX(1.075);">03-11_石灰石</span><div class="b" style="left:0.0px;top:148.2px;width:91.5px;height:11.1px;background:#c6e0b4;border:1px solid #b2cf9e;border-radius:2px"></div><span class="t" style="left:5.2px;top:149.4px;font-size:6.4px;line-height:9px;color:#444;transform:scaleX(1.063);">03-12_その他の非金属鉱</span></div>
<div class="b" style="left:198.8px;top:289.0px;width:10.8px;height:155.0px;background:#f0f0f0"></div>
<div class="b" style="left:202.6px;top:299.8px;width:3.7px;height:45.0px;background:#8a8a8a;border-radius:1px"></div>
<svg style="left:0;top:0;font-family:'Liberation Sans','Noto Sans CJK JP',sans-serif" width="924" height="477" viewBox="0 0 924 477"><defs><radialGradient id="cbg" cx="50%" cy="52%" r="72%"><stop offset="0" stop-color="#5c5c5c"/><stop offset=".5" stop-color="#4e4e4e"/><stop offset="1" stop-color="#2b2b2b"/></radialGradient><filter id="sh" x="-5%" y="-5%" width="110%" height="115%"><feGaussianBlur in="SourceAlpha" stdDeviation="1"/><feOffset dx="0" dy="1.200"/><feComponentTransfer><feFuncA type="linear" slope=".7"/></feComponentTransfer><feMerge><feMergeNode/><feMergeNode in="SourceGraphic"/></feMerge></filter><linearGradient id="btn" x1="0" y1="0" x2="0" y2="1"><stop offset="0" stop-color="#f6f6f6"/><stop offset=".5" stop-color="#e2e2e2"/><stop offset="1" stop-color="#bcbcbc"/></linearGradient></defs><rect x="218.5" y="62.5" width="477.7" height="390.2" fill="#fff"/><rect x="220.2" y="64.4" width="473.7" height="385.6" fill="url(#cbg)"/><path d="M262 88.3H545.500" stroke="#fff" stroke-opacity=".085" stroke-width="1"/><text x="253.600" y="90.6" font-size="6.500" fill="#d9d9d9" text-anchor="end" textLength="28.8" lengthAdjust="spacingAndGlyphs">1,800,000</text><path d="M262 122.4H545.500" stroke="#fff" stroke-opacity=".085" stroke-width="1"/><text x="253.600" y="124.7" font-size="6.500" fill="#d9d9d9" text-anchor="end" textLength="28.8" lengthAdjust="spacingAndGlyphs">1,600,000</text><path d="M262 156.6H545.500" stroke="#fff" stroke-opacity=".085" stroke-width="1"/><text x="253.600" y="158.9" font-size="6.500" fill="#d9d9d9" text-anchor="end" textLength="28.8" lengthAdjust="spacingAndGlyphs">1,400,000</text><path d="M262 190.8H545.500" stroke="#fff" stroke-opacity=".085" stroke-width="1"/><text x="253.600" y="193.1" font-size="6.500" fill="#d9d9d9" text-anchor="end" textLength="28.8" lengthAdjust="spacingAndGlyphs">1,200,000</text><path d="M262 224.9H545.500" stroke="#fff" stroke-opacity=".085" stroke-width="1"/><text x="253.600" y="227.2" font-size="6.500" fill="#d9d9d9" text-anchor="end" textLength="28.8" lengthAdjust="spacingAndGlyphs">1,000,000</text><path d="M262 259.1H545.500" stroke="#fff" stroke-opacity=".085" stroke-width="1"/><text x="253.600" y="261.4" font-size="6.500" fill="#d9d9d9" text-anchor="end" textLength="22.4" lengthAdjust="spacingAndGlyphs">800,000</text><path d="M262 293.2H545.500" stroke="#fff" stroke-opacity=".085" stroke-width="1"/><text x="253.600" y="295.5" font-size="6.500" fill="#d9d9d9" text-anchor="end" textLength="22.4" lengthAdjust="spacingAndGlyphs">600,000</text><path d="M262 327.3H545.500" stroke="#fff" stroke-opacity=".085" stroke-width="1"/><text x="253.600" y="329.6" font-size="6.500" fill="#d9d9d9" text-anchor="end" textLength="22.4" lengthAdjust="spacingAndGlyphs">400,000</text><path d="M262 361.5H545.500" stroke="#fff" stroke-opacity=".085" stroke-width="1"/><text x="253.600" y="363.8" font-size="6.500" fill="#d9d9d9" text-anchor="end" textLength="22.4" lengthAdjust="spacingAndGlyphs">200,000</text><path d="M262 395.6H545.500" stroke="#fff" stroke-opacity=".085" stroke-width="1"/><text x="253.600" y="397.9" font-size="6.500" fill="#d9d9d9" text-anchor="end" textLength="3.4" lengthAdjust="spacingAndGlyphs">0</text><text transform="translate(270.7 429.300) rotate(-90)" font-size="6.200" fill="#d9d9d9" stroke="#d9d9d9" stroke-width=".22" textLength="28.300" lengthAdjust="spacingAndGlyphs">2000年度</text><text transform="translate(283.6 429.300) rotate(-90)" font-size="6.200" fill="#d9d9d9" stroke="#d9d9d9" stroke-width=".22" textLength="28.300" lengthAdjust="spacingAndGlyphs">2001年度</text><text transform="translate(296.5 429.300) rotate(-90)" font-size="6.200" fill="#d9d9d9" stroke="#d9d9d9" stroke-width=".22" textLength="28.300" lengthAdjust="spacingAndGlyphs">2002年度</text><text transform="translate(309.4 429.300) rotate(-90)" font-size="6.200" fill="#d9d9d9" stroke="#d9d9d9" stroke-width=".22" textLength="28.300" lengthAdjust="spacingAndGlyphs">2003年度</text><text transform="translate(322.2 429.300) rotate(-90)" font-size="6.200" fill="#d9d9d9" stroke="#d9d9d9" stroke-width=".22" textLength="28.300" lengthAdjust="spacingAndGlyphs">2004年度</text><text transform="translate(335.1 429.300) rotate(-90)" font-size="6.200" fill="#d9d9d9" stroke="#d9d9d9" stroke-width=".22" textLength="28.300" lengthAdjust="spacingAndGlyphs">2005年度</text><text transform="translate(348.0 429.300) rotate(-90)" font-size="6.200" fill="#d9d9d9" stroke="#d9d9d9" stroke-width=".22" textLength="28.300" lengthAdjust="spacingAndGlyphs">2006年度</text><text transform="translate(360.9 429.300) rotate(-90)" font-size="6.200" fill="#d9d9d9" stroke="#d9d9d9" stroke-width=".22" textLength="28.300" lengthAdjust="spacingAndGlyphs">2007年度</text><text transform="translate(373.8 429.300) rotate(-90)" font-size="6.200" fill="#d9d9d9" stroke="#d9d9d9" stroke-width=".22" textLength="28.300" lengthAdjust="spacingAndGlyphs">2008年度</text><text transform="translate(386.7 429.300) rotate(-90)" font-size="6.200" fill="#d9d9d9" stroke="#d9d9d9" stroke-width=".22" textLength="28.300" lengthAdjust="spacingAndGlyphs">2009年度</text><text transform="translate(399.6 429.300) rotate(-90)" font-size="6.200" fill="#d9d9d9" stroke="#d9d9d9" stroke-width=".22" textLength="28.300" lengthAdjust="spacingAndGlyphs">2010年度</text><text transform="translate(412.4 429.300) rotate(-90)" font-size="6.200" fill="#d9d9d9" stroke="#d9d9d9" stroke-width=".22" textLength="28.300" lengthAdjust="spacingAndGlyphs">2011年度</text><text transform="translate(425.3 429.300) rotate(-90)" font-size="6.200" fill="#d9d9d9" stroke="#d9d9d9" stroke-width=".22" textLength="28.300" lengthAdjust="spacingAndGlyphs">2012年度</text><text transform="translate(438.2 429.300) rotate(-90)" font-size="6.200" fill="#d9d9d9" stroke="#d9d9d9" stroke-width=".22" textLength="28.300" lengthAdjust="spacingAndGlyphs">2013年度</text><text transform="translate(451.1 429.300) rotate(-90)" font-size="6.200" fill="#d9d9d9" stroke="#d9d9d9" stroke-width=".22" textLength="28.300" lengthAdjust="spacingAndGlyphs">2014年度</text><text transform="translate(464.0 429.300) rotate(-90)" font-size="6.200" fill="#d9d9d9" stroke="#d9d9d9" stroke-width=".22" textLength="28.300" lengthAdjust="spacingAndGlyphs">2015年度</text><text transform="translate(476.9 429.300) rotate(-90)" font-size="6.200" fill="#d9d9d9" stroke="#d9d9d9" stroke-width=".22" textLength="28.300" lengthAdjust="spacingAndGlyphs">2016年度</text><text transform="translate(489.8 429.300) rotate(-90)" font-size="6.200" fill="#d9d9d9" stroke="#d9d9d9" stroke-width=".22" textLength="28.300" lengthAdjust="spacingAndGlyphs">2017年度</text><text transform="translate(502.6 429.300) rotate(-90)" font-size="6.200" fill="#d9d9d9" stroke="#d9d9d9" stroke-width=".22" textLength="28.300" lengthAdjust="spacingAndGlyphs">2018年度</text><text transform="translate(515.5 429.300) rotate(-90)" font-size="6.200" fill="#d9d9d9" stroke="#d9d9d9" stroke-width=".22" textLength="28.300" lengthAdjust="spacingAndGlyphs">2019年度</text><text transform="translate(528.4 429.300) rotate(-90)" font-size="6.200" fill="#d9d9d9" stroke="#d9d9d9" stroke-width=".22" textLength="28.300" lengthAdjust="spacingAndGlyphs">2020年度</text><text transform="translate(541.3 429.300) rotate(-90)" font-size="6.200" fill="#d9d9d9" stroke="#d9d9d9" stroke-width=".22" textLength="28.300" lengthAdjust="spacingAndGlyphs">2021年度</text><g filter="url(#sh)" fill="none" stroke-linejoin="round" stroke-linecap="round"><polyline points="268.2,353.4 281.1,353.4 294.0,350.9 306.9,348.8 319.7,351.5 332.6,352.0 345.5,356.6 358.4,355.1 371.3,356.2 384.2,355.5 397.1,356.2 409.9,355.5 422.8,355.5 435.7,358.7 448.6,360.3 461.5,358.7 474.4,357.8 487.3,356.6 500.1,359.3 513.0,358.2 525.9,361.8 538.8,361.0" stroke="#3f78d8" stroke-width="2.200"/><g fill="#3f78d8" stroke="#000" stroke-opacity=".22" stroke-width=".5"><circle cx="268.2" cy="353.4" r="2.500"/><circle cx="281.1" cy="353.4" r="2.500"/><circle cx="294.0" cy="350.9" r="2.500"/><circle cx="306.9" cy="348.8" r="2.500"/><circle cx="319.7" cy="351.5" r="2.500"/><circle cx="332.6" cy="352.0" r="2.500"/><circle cx="345.5" cy="356.6" r="2.500"/><circle cx="358.4" cy="355.1" r="2.500"/><circle cx="371.3" cy="356.2" r="2.500"/><circle cx="384.2" cy="355.5" r="2.500"/><circle cx="397.1" cy="356.2" r="2.500"/><circle cx="409.9" cy="355.5" r="2.500"/><circle cx="422.8" cy="355.5" r="2.500"/><circle cx="435.7" cy="358.7" r="2.500"/><circle cx="448.6" cy="360.3" r="2.500"/><circle cx="461.5" cy="358.7" r="2.500"/><circle cx="474.4" cy="357.8" r="2.500"/><circle cx="487.3" cy="356.6" r="2.500"/><circle cx="500.1" cy="359.3" r="2.500"/><circle cx="513.0" cy="358.2" r="2.500"/><circle cx="525.9" cy="361.8" r="2.500"/><circle cx="538.8" cy="361.0" r="2.500"/></g><polyline points="268.2,362.0 281.1,360.8 294.0,366.2 306.9,369.4 319.7,366.0 332.6,366.2 345.5,368.7 358.4,368.1 371.3,367.1 384.2,368.1 397.1,371.9 409.9,369.8 422.8,370.4 435.7,372.5 448.6,372.9 461.5,372.9 474.4,371.9 487.3,371.9 500.1,371.5 513.0,370.2 525.9,375.0 538.8,372.5" stroke="#f0822c" stroke-width="2.200"/><g fill="#f0822c" stroke="#000" stroke-opacity=".22" stroke-width=".5"><circle cx="268.2" cy="362.0" r="2.500"/><circle cx="281.1" cy="360.8" r="2.500"/><circle cx="294.0" cy="366.2" r="2.500"/><circle cx="306.9" cy="369.4" r="2.500"/><circle cx="319.7" cy="366.0" r="2.500"/><circle cx="332.6" cy="366.2" r="2.500"/><circle cx="345.5" cy="368.7" r="2.500"/><circle cx="358.4" cy="368.1" r="2.500"/><circle cx="371.3" cy="367.1" r="2.500"/><circle cx="384.2" cy="368.1" r="2.500"/><circle cx="397.1" cy="371.9" r="2.500"/><circle cx="409.9" cy="369.8" r="2.500"/><circle cx="422.8" cy="370.4" r="2.500"/><circle cx="435.7" cy="372.5" r="2.500"/><circle cx="448.6" cy="372.9" r="2.500"/><circle cx="461.5" cy="372.9" r="2.500"/><circle cx="474.4" cy="371.9" r="2.500"/><circle cx="487.3" cy="371.9" r="2.500"/><circle cx="500.1" cy="371.5" r="2.500"/><circle cx="513.0" cy="370.2" r="2.500"/><circle cx="525.9" cy="375.0" r="2.500"/><circle cx="538.8" cy="372.5" r="2.500"/></g><polyline points="268.2,115.7 281.1,138.0 294.0,166.5 306.9,181.9 319.7,216.2 332.6,238.2 345.5,250.3 358.4,229.6 371.3,240.3 384.2,249.7 397.1,264.8 409.9,276.7 422.8,278.8 435.7,278.8 448.6,277.1 461.5,294.1 474.4,292.4 487.3,295.6 500.1,298.7 513.0,306.7 525.9,287.2 538.8,285.5" stroke="#b8b8b8" stroke-width="2.200"/><g fill="#b8b8b8" stroke="#000" stroke-opacity=".22" stroke-width=".5"><circle cx="268.2" cy="115.7" r="2.500"/><circle cx="281.1" cy="138.0" r="2.500"/><circle cx="294.0" cy="166.5" r="2.500"/><circle cx="306.9" cy="181.9" r="2.500"/><circle cx="319.7" cy="216.2" r="2.500"/><circle cx="332.6" cy="238.2" r="2.500"/><circle cx="345.5" cy="250.3" r="2.500"/><circle cx="358.4" cy="229.6" r="2.500"/><circle cx="371.3" cy="240.3" r="2.500"/><circle cx="384.2" cy="249.7" r="2.500"/><circle cx="397.1" cy="264.8" r="2.500"/><circle cx="409.9" cy="276.7" r="2.500"/><circle cx="422.8" cy="278.8" r="2.500"/><circle cx="435.7" cy="278.8" r="2.500"/><circle cx="448.6" cy="277.1" r="2.500"/><circle cx="461.5" cy="294.1" r="2.500"/><circle cx="474.4" cy="292.4" r="2.500"/><circle cx="487.3" cy="295.6" r="2.500"/><circle cx="500.1" cy="298.7" r="2.500"/><circle cx="513.0" cy="306.7" r="2.500"/><circle cx="525.9" cy="287.2" r="2.500"/><circle cx="538.8" cy="285.5" r="2.500"/></g><polyline points="268.2,277.8 281.1,279.9 294.0,284.5 306.9,287.8 319.7,280.9 332.6,276.7 345.5,272.1 358.4,264.5 371.3,275.2 384.2,282.0 397.1,271.5 409.9,278.8 422.8,282.6 435.7,287.6 448.6,287.8 461.5,278.8 474.4,280.5 487.3,269.4 500.1,268.3 513.0,250.4 525.9,293.5 538.8,291.0" stroke="#ffc20e" stroke-width="2.200"/><g fill="#ffc20e" stroke="#000" stroke-opacity=".22" stroke-width=".5"><circle cx="268.2" cy="277.8" r="2.500"/><circle cx="281.1" cy="279.9" r="2.500"/><circle cx="294.0" cy="284.5" r="2.500"/><circle cx="306.9" cy="287.8" r="2.500"/><circle cx="319.7" cy="280.9" r="2.500"/><circle cx="332.6" cy="276.7" r="2.500"/><circle cx="345.5" cy="272.1" r="2.500"/><circle cx="358.4" cy="264.5" r="2.500"/><circle cx="371.3" cy="275.2" r="2.500"/><circle cx="384.2" cy="282.0" r="2.500"/><circle cx="397.1" cy="271.5" r="2.500"/><circle cx="409.9" cy="278.8" r="2.500"/><circle cx="422.8" cy="282.6" r="2.500"/><circle cx="435.7" cy="287.6" r="2.500"/><circle cx="448.6" cy="287.8" r="2.500"/><circle cx="461.5" cy="278.8" r="2.500"/><circle cx="474.4" cy="280.5" r="2.500"/><circle cx="487.3" cy="269.4" r="2.500"/><circle cx="500.1" cy="268.3" r="2.500"/><circle cx="513.0" cy="250.4" r="2.500"/><circle cx="525.9" cy="293.5" r="2.500"/><circle cx="538.8" cy="291.0" r="2.500"/></g><polyline points="268.2,253.1 281.1,263.1 294.0,272.5 306.9,280.9 319.7,276.7 332.6,284.0 345.5,277.8 358.4,284.7 371.3,287.2 384.2,296.2 397.1,280.9 409.9,281.7 422.8,272.5 435.7,277.8 448.6,276.7 461.5,287.2 474.4,295.6 487.3,286.2 500.1,296.6 513.0,290.3 525.9,281.3 538.8,282.4" stroke="#5aa2e6" stroke-width="2.200"/><g fill="#5aa2e6" stroke="#000" stroke-opacity=".22" stroke-width=".5"><circle cx="268.2" cy="253.1" r="2.500"/><circle cx="281.1" cy="263.1" r="2.500"/><circle cx="294.0" cy="272.5" r="2.500"/><circle cx="306.9" cy="280.9" r="2.500"/><circle cx="319.7" cy="276.7" r="2.500"/><circle cx="332.6" cy="284.0" r="2.500"/><circle cx="345.5" cy="277.8" r="2.500"/><circle cx="358.4" cy="284.7" r="2.500"/><circle cx="371.3" cy="287.2" r="2.500"/><circle cx="384.2" cy="296.2" r="2.500"/><circle cx="397.1" cy="280.9" r="2.500"/><circle cx="409.9" cy="281.7" r="2.500"/><circle cx="422.8" cy="272.5" r="2.500"/><circle cx="435.7" cy="277.8" r="2.500"/><circle cx="448.6" cy="276.7" r="2.500"/><circle cx="461.5" cy="287.2" r="2.500"/><circle cx="474.4" cy="295.6" r="2.500"/><circle cx="487.3" cy="286.2" r="2.500"/><circle cx="500.1" cy="296.6" r="2.500"/><circle cx="513.0" cy="290.3" r="2.500"/><circle cx="525.9" cy="281.3" r="2.500"/><circle cx="538.8" cy="282.4" r="2.500"/></g><polyline points="268.2,302.3 281.1,295.6 294.0,291.4 306.9,284.0 319.7,293.0 332.6,294.5 345.5,300.8 358.4,296.6 371.3,293.5 384.2,297.0 397.1,298.1 409.9,305.7 422.8,308.2 435.7,309.9 448.6,309.2 461.5,298.7 474.4,286.8 487.3,299.8 500.1,291.0 513.0,295.6 525.9,322.4 538.8,320.1" stroke="#6ab546" stroke-width="2.200"/><g fill="#6ab546" stroke="#000" stroke-opacity=".22" stroke-width=".5"><circle cx="268.2" cy="302.3" r="2.500"/><circle cx="281.1" cy="295.6" r="2.500"/><circle cx="294.0" cy="291.4" r="2.500"/><circle cx="306.9" cy="284.0" r="2.500"/><circle cx="319.7" cy="293.0" r="2.500"/><circle cx="332.6" cy="294.5" r="2.500"/><circle cx="345.5" cy="300.8" r="2.500"/><circle cx="358.4" cy="296.6" r="2.500"/><circle cx="371.3" cy="293.5" r="2.500"/><circle cx="384.2" cy="297.0" r="2.500"/><circle cx="397.1" cy="298.1" r="2.500"/><circle cx="409.9" cy="305.7" r="2.500"/><circle cx="422.8" cy="308.2" r="2.500"/><circle cx="435.7" cy="309.9" r="2.500"/><circle cx="448.6" cy="309.2" r="2.500"/><circle cx="461.5" cy="298.7" r="2.500"/><circle cx="474.4" cy="286.8" r="2.500"/><circle cx="487.3" cy="299.8" r="2.500"/><circle cx="500.1" cy="291.0" r="2.500"/><circle cx="513.0" cy="295.6" r="2.500"/><circle cx="525.9" cy="322.4" r="2.500"/><circle cx="538.8" cy="320.1" r="2.500"/></g><polyline points="268.2,337.6 281.1,339.0 294.0,330.4 306.9,332.1 319.7,328.5 332.6,332.4 345.5,333.4 358.4,331.6 371.3,333.0 384.2,337.6 397.1,335.3 409.9,335.3 422.8,342.1 435.7,347.8 448.6,347.3 461.5,347.8 474.4,336.2 487.3,338.9 500.1,334.1 513.0,332.0 525.9,361.4 538.8,360.3" stroke="#1f4a94" stroke-width="2.200"/><g fill="#1f4a94" stroke="#000" stroke-opacity=".22" stroke-width=".5"><circle cx="268.2" cy="337.6" r="2.500"/><circle cx="281.1" cy="339.0" r="2.500"/><circle cx="294.0" cy="330.4" r="2.500"/><circle cx="306.9" cy="332.1" r="2.500"/><circle cx="319.7" cy="328.5" r="2.500"/><circle cx="332.6" cy="332.4" r="2.500"/><circle cx="345.5" cy="333.4" r="2.500"/><circle cx="358.4" cy="331.6" r="2.500"/><circle cx="371.3" cy="333.0" r="2.500"/><circle cx="384.2" cy="337.6" r="2.500"/><circle cx="397.1" cy="335.3" r="2.500"/><circle cx="409.9" cy="335.3" r="2.500"/><circle cx="422.8" cy="342.1" r="2.500"/><circle cx="435.7" cy="347.8" r="2.500"/><circle cx="448.6" cy="347.3" r="2.500"/><circle cx="461.5" cy="347.8" r="2.500"/><circle cx="474.4" cy="336.2" r="2.500"/><circle cx="487.3" cy="338.9" r="2.500"/><circle cx="500.1" cy="334.1" r="2.500"/><circle cx="513.0" cy="332.0" r="2.500"/><circle cx="525.9" cy="361.4" r="2.500"/><circle cx="538.8" cy="360.3" r="2.500"/></g><polyline points="268.2,192.0 281.1,197.2 294.0,207.3 306.9,200.8 319.7,202.3 332.6,173.1 345.5,158.3 358.4,190.4 371.3,206.1 384.2,216.2 397.1,202.5 409.9,192.0 422.8,208.8 435.7,190.3 448.6,197.3 461.5,193.7 474.4,200.0 487.3,196.9 500.1,204.6 513.0,220.3 525.9,234.4 538.8,225.6" stroke="#b04f0d" stroke-width="2.200"/><g fill="#b04f0d" stroke="#000" stroke-opacity=".22" stroke-width=".5"><circle cx="268.2" cy="192.0" r="2.500"/><circle cx="281.1" cy="197.2" r="2.500"/><circle cx="294.0" cy="207.3" r="2.500"/><circle cx="306.9" cy="200.8" r="2.500"/><circle cx="319.7" cy="202.3" r="2.500"/><circle cx="332.6" cy="173.1" r="2.500"/><circle cx="345.5" cy="158.3" r="2.500"/><circle cx="358.4" cy="190.4" r="2.500"/><circle cx="371.3" cy="206.1" r="2.500"/><circle cx="384.2" cy="216.2" r="2.500"/><circle cx="397.1" cy="202.5" r="2.500"/><circle cx="409.9" cy="192.0" r="2.500"/><circle cx="422.8" cy="208.8" r="2.500"/><circle cx="435.7" cy="190.3" r="2.500"/><circle cx="448.6" cy="197.3" r="2.500"/><circle cx="461.5" cy="193.7" r="2.500"/><circle cx="474.4" cy="200.0" r="2.500"/><circle cx="487.3" cy="196.9" r="2.500"/><circle cx="500.1" cy="204.6" r="2.500"/><circle cx="513.0" cy="220.3" r="2.500"/><circle cx="525.9" cy="234.4" r="2.500"/><circle cx="538.8" cy="225.6" r="2.500"/></g><polyline points="268.2,378.8 281.1,379.9 294.0,379.2 306.9,378.8 319.7,378.4 332.6,395.7 345.5,395.7 358.4,395.7 371.3,395.7 384.2,395.7 397.1,395.7 409.9,395.7 422.8,395.7 435.7,395.7 448.6,395.7 461.5,395.7 474.4,395.7 487.3,395.7 500.1,395.7 513.0,395.7 525.9,395.7 538.8,395.7" stroke="#646464" stroke-width="2.200"/><g fill="#646464" stroke="#000" stroke-opacity=".22" stroke-width=".5"><circle cx="268.2" cy="378.8" r="2.500"/><circle cx="281.1" cy="379.9" r="2.500"/><circle cx="294.0" cy="379.2" r="2.500"/><circle cx="306.9" cy="378.8" r="2.500"/><circle cx="319.7" cy="378.4" r="2.500"/><circle cx="332.6" cy="395.7" r="2.500"/><circle cx="345.5" cy="395.7" r="2.500"/><circle cx="358.4" cy="395.7" r="2.500"/><circle cx="371.3" cy="395.7" r="2.500"/><circle cx="384.2" cy="395.7" r="2.500"/><circle cx="397.1" cy="395.7" r="2.500"/><circle cx="409.9" cy="395.7" r="2.500"/><circle cx="422.8" cy="395.7" r="2.500"/><circle cx="435.7" cy="395.7" r="2.500"/><circle cx="448.6" cy="395.7" r="2.500"/><circle cx="461.5" cy="395.7" r="2.500"/><circle cx="474.4" cy="395.7" r="2.500"/><circle cx="487.3" cy="395.7" r="2.500"/><circle cx="500.1" cy="395.7" r="2.500"/><circle cx="513.0" cy="395.7" r="2.500"/><circle cx="525.9" cy="395.7" r="2.500"/><circle cx="538.8" cy="395.7" r="2.500"/></g></g><g filter="url(#sh)"><path d="M557.200 214.2H574" stroke="#3f78d8" stroke-width="1.900" stroke-linecap="round"/><circle cx="565.500" cy="214.2" r="2" fill="#3f78d8"/></g><text x="576" y="216.6" font-size="6.700" fill="#d2d2d2" textLength="79.6" lengthAdjust="spacingAndGlyphs">自動車輸送 - 01_農水産品</text><g filter="url(#sh)"><path d="M557.200 227.7H574" stroke="#f0822c" stroke-width="1.900" stroke-linecap="round"/><circle cx="565.500" cy="227.7" r="2" fill="#f0822c"/></g><text x="576" y="230.1" font-size="6.700" fill="#d2d2d2" textLength="72.4" lengthAdjust="spacingAndGlyphs">自動車輸送 - 02_林産品</text><g filter="url(#sh)"><path d="M557.200 241.2H574" stroke="#b8b8b8" stroke-width="1.900" stroke-linecap="round"/><circle cx="565.500" cy="241.2" r="2" fill="#b8b8b8"/></g><text x="576" y="243.6" font-size="6.700" fill="#d2d2d2" textLength="72.4" lengthAdjust="spacingAndGlyphs">自動車輸送 - 03_鉱産品</text><g filter="url(#sh)"><path d="M557.200 254.7H574" stroke="#ffc20e" stroke-width="1.900" stroke-linecap="round"/><circle cx="565.500" cy="254.7" r="2" fill="#ffc20e"/></g><text x="576" y="257.1" font-size="6.700" fill="#d2d2d2" textLength="108.6" lengthAdjust="spacingAndGlyphs">自動車輸送 - 04_金属・機械工業品</text><g filter="url(#sh)"><path d="M557.200 268.2H574" stroke="#5aa2e6" stroke-width="1.900" stroke-linecap="round"/><circle cx="565.500" cy="268.2" r="2" fill="#5aa2e6"/></g><text x="576" y="270.6" font-size="6.700" fill="#d2d2d2" textLength="86.5" lengthAdjust="spacingAndGlyphs">自動車輸送 - 05_化学工業品</text><g filter="url(#sh)"><path d="M557.200 281.6H574" stroke="#6ab546" stroke-width="1.900" stroke-linecap="round"/><circle cx="565.500" cy="281.6" r="2" fill="#6ab546"/></g><text x="576" y="284.0" font-size="6.700" fill="#d2d2d2" textLength="79.6" lengthAdjust="spacingAndGlyphs">自動車輸送 - 06_軽工業品</text><g filter="url(#sh)"><path d="M557.200 295.1H574" stroke="#1f4a94" stroke-width="1.900" stroke-linecap="round"/><circle cx="565.500" cy="295.1" r="2" fill="#1f4a94"/></g><text x="576" y="297.5" font-size="6.700" fill="#d2d2d2" textLength="79.6" lengthAdjust="spacingAndGlyphs">自動車輸送 - 07_雑工業品</text><g filter="url(#sh)"><path d="M557.200 308.6H574" stroke="#b04f0d" stroke-width="1.900" stroke-linecap="round"/><circle cx="565.500" cy="308.6" r="2" fill="#b04f0d"/></g><text x="576" y="311.0" font-size="6.700" fill="#d2d2d2" textLength="72.4" lengthAdjust="spacingAndGlyphs">自動車輸送 - 08_特種品</text><g filter="url(#sh)"><path d="M557.200 322.1H574" stroke="#646464" stroke-width="1.900" stroke-linecap="round"/><circle cx="565.500" cy="322.1" r="2" fill="#646464"/></g><text x="576" y="324.5" font-size="6.700" fill="#d2d2d2" textLength="72.4" lengthAdjust="spacingAndGlyphs">自動車輸送 - 09_その他</text><rect x="225.7" y="68.9" width="75.2" height="10" fill="url(#btn)" stroke="#9a9a9a" stroke-width=".7"/><text x="227.89999999999998" y="76.2" font-size="6.300" fill="#222" textLength="71" lengthAdjust="spacingAndGlyphs">合計 / 輸送トン数 (千トン)</text><rect x="555" y="185.7" width="133.6" height="9.9" fill="url(#btn)" stroke="#9a9a9a" stroke-width=".7"/><text x="557.2" y="192.9" font-size="6.300" fill="#222" textLength="23.5" lengthAdjust="spacingAndGlyphs">輸送機関</text><path d="M675.4 189.8h3.400l-1.700 2.100z" fill="#222"/><path d="M680.6 187.8h5.600l-2.100 2.500v2.800l-1.400-.9v-1.900z" fill="#444"/><rect x="555" y="196.9" width="133.6" height="9.9" fill="url(#btn)" stroke="#9a9a9a" stroke-width=".7"/><text x="557.2" y="204.2" font-size="6.300" fill="#222" textLength="28" lengthAdjust="spacingAndGlyphs">code_分類</text><path d="M681.4 201.0h3.400l-1.700 2.100z" fill="#222"/><rect x="225.6" y="435.1" width="26" height="10.1" fill="url(#btn)" stroke="#9a9a9a" stroke-width=".7"/><text x="227.79999999999998" y="442.5" font-size="6.300" fill="#222" textLength="11.8" lengthAdjust="spacingAndGlyphs">年度</text><path d="M244.4 439.4h3.400l-1.700 2.100z" fill="#222"/><circle cx="220.0" cy="64.0" r="2.900" fill="#fff" stroke="#444" stroke-width=".9"/><circle cx="457.6" cy="64.0" r="2.900" fill="#fff" stroke="#444" stroke-width=".9"/><circle cx="695.2" cy="64.0" r="2.900" fill="#fff" stroke="#444" stroke-width=".9"/><circle cx="220.0" cy="257.9" r="2.900" fill="#fff" stroke="#444" stroke-width=".9"/><circle cx="695.2" cy="257.9" r="2.900" fill="#fff" stroke="#444" stroke-width=".9"/><circle cx="220.0" cy="451.7" r="2.900" fill="#fff" stroke="#444" stroke-width=".9"/><circle cx="457.6" cy="451.7" r="2.900" fill="#fff" stroke="#444" stroke-width=".9"/><circle cx="695.2" cy="451.7" r="2.900" fill="#fff" stroke="#444" stroke-width=".9"/></svg>
<div class="b" style="left:702.5px;top:47.5px;width:11.0px;height:410.5px;background:#f0f0f0"></div>
<svg style="left:704.400px;top:49.800px" width="5.600" height="4" viewBox="0 0 5.600 4"><path d="M0 4L2.800 0l2.800 4z" fill="#666"/></svg>
<div class="b" style="left:704.7px;top:56.6px;width:5.2px;height:191.0px;background:#6c6c6c;border-radius:2.600px"></div>
<svg style="left:704.400px;top:452px" width="5.600" height="4" viewBox="0 0 5.600 4"><path d="M0 0l2.800 4 2.800-4z" fill="#666"/></svg>
<div class="b" style="left:713.0px;top:47.5px;width:211.0px;height:429.5px;background:#f0f0f0;border-left:1px solid #d9d9d9"></div>
<span class="t" style="left:720.0px;top:51.2px;font-size:14px;line-height:20px;color:#3c3c3c;transform:scaleX(0.671);">ピボットグラフのフィールド</span>
<svg style="left:886.800px;top:59.800px" width="8.400" height="5.200" viewBox="0 0 8.400 5.200" fill="none" stroke="#444" stroke-width=".9"><path d="M.4.500l3.800 4 3.800-4"/></svg>
<svg style="left:907px;top:59.100px" width="6.400" height="6.400" viewBox="0 0 6.400 6.400" fill="none" stroke="#444" stroke-width=".9"><path d="M.3.300l5.800 5.800M6.100.3L.3 6.100"/></svg>
<span class="t" style="left:721.0px;top:73.0px;font-size:8.5px;line-height:12px;color:#222;font-weight:700;transform:scaleX(0.697);">アクティブ</span>
<span class="t" style="left:764.7px;top:73.0px;font-size:8.5px;line-height:12px;color:#444;transform:scaleX(0.692);">すべて</span>
<div class="b" style="left:721.1px;top:88.0px;width:29.6px;height:1.3px;background:#107c41"></div>
<span class="t" style="left:721.1px;top:95.5px;font-size:8px;line-height:11px;color:#333;transform:scaleX(0.713);">レポートに追加するフィールドを選択してください:</span>
<div class="b" style="left:889.5px;top:91.3px;width:27.2px;height:17.4px;background:#fff;border:1px solid #c8c8c8;border-radius:1px"></div>
<svg style="left:894.900px;top:95px" width="10" height="10" viewBox="0 0 9 9" fill="none" stroke="#444" stroke-width=".75"><circle cx="4.500" cy="4.500" r="1.500"/><path d="M3.700.5h1.600l.3 1.100.9.500 1.100-.3.800 1.400-.8.800v1l.8.800-.8 1.400-1.100-.3-.9.500-.3 1.100H3.700l-.3-1.100-.9-.5-1.100.3-.8-1.400.8-.8v-1l-.8-.8.800-1.400 1.100.3.900-.5z"/></svg>
<svg style="left:909px;top:98.800px" width="4" height="3" viewBox="0 0 4 3" fill="none" stroke="#444" stroke-width=".8"><path d="M.3.400l1.700 1.800L3.700.4"/></svg>
<div class="b" style="left:720.9px;top:117.3px;width:195.8px;height:13.5px;background:#fff;border:1px solid #bcbcbc"></div>
<span class="t" style="left:724.6px;top:119.2px;font-size:7.5px;line-height:10px;color:#969696;transform:scaleX(0.913);">検索</span>
<svg style="left:905.500px;top:119.800px" width="8.500" height="8.500" viewBox="0 0 8.500 8.500" fill="none" stroke="#555" stroke-width=".8"><circle cx="5.200" cy="3.300" r="2.800"/><path d="M3.200 5.300L.4 8.100"/></svg>
<div class="b" style="left:721.1px;top:141.7px;width:196.2px;height:119.5px;background:#fff;border:1px solid #c6c6c6"></div>
<svg style="left:726.500px;top:145px" width="4" height="4.500" viewBox="0 0 4 4.500" fill="none" stroke="#777" stroke-width=".7"><path d="M3.600 0v4H.3"/></svg>
<svg style="left:732.500px;top:142.800px" width="9.600" height="9.600" viewBox="0 0 9 8.500" preserveAspectRatio="none" fill="none" stroke="#555" stroke-width=".7"><rect x=".4" y=".4" width="8.200" height="7.700"/><path d="M.4 2.600h8.200M.4 4.500h8.200M.4 6.300h8.200M3.100 2.600v5.500M5.900 2.600v5.500"/></svg>
<span class="t" style="left:743.5px;top:141.7px;font-size:8.5px;line-height:12px;color:#222;font-weight:700;transform:scaleX(0.997);">_00600_mlit_00600460_kam01_full_list</span>
<div class="b" style="left:743.9px;top:154.0px;width:8.0px;height:7.8px;background:#fff;border:1px solid #b4b4b4;border-radius:.5px"></div>
<span class="t" style="left:755.2px;top:152.4px;font-size:7.6px;line-height:11px;color:#444;transform:scaleX(0.948);">日付</span>
<div class="b" style="left:743.9px;top:168.9px;width:8.0px;height:7.8px;background:#107c41;border-radius:1px"></div>
<svg style="left:745.400px;top:170.4px" width="5.200" height="4.800" viewBox="0 0 5 4.600" fill="none" stroke="#fff" stroke-width=".9"><path d="M.4 2.300l1.500 1.500L4.600.5"/></svg>
<span class="t" style="left:755.2px;top:167.3px;font-size:7.6px;line-height:11px;color:#222;font-weight:700;transform:scaleX(0.948);">年度</span>
<div class="b" style="left:743.9px;top:183.7px;width:8.0px;height:7.8px;background:#fff;border:1px solid #b4b4b4;border-radius:.5px"></div>
<span class="t" style="left:755.2px;top:182.1px;font-size:7.6px;line-height:11px;color:#444;transform:scaleX(0.948);">種類</span>
<div class="b" style="left:743.9px;top:198.6px;width:8.0px;height:7.8px;background:#107c41;border-radius:1px"></div>
<svg style="left:745.400px;top:200.1px" width="5.200" height="4.800" viewBox="0 0 5 4.600" fill="none" stroke="#fff" stroke-width=".9"><path d="M.4 2.300l1.500 1.500L4.600.5"/></svg>
<span class="t" style="left:755.2px;top:197.0px;font-size:7.6px;line-height:11px;color:#222;font-weight:700;transform:scaleX(0.988);">輸送機関</span>
<div class="b" style="left:743.9px;top:213.5px;width:8.0px;height:7.8px;background:#107c41;border-radius:1px"></div>
<svg style="left:745.400px;top:215.0px" width="5.200" height="4.800" viewBox="0 0 5 4.600" fill="none" stroke="#fff" stroke-width=".9"><path d="M.4 2.300l1.500 1.500L4.600.5"/></svg>
<span class="t" style="left:755.2px;top:211.9px;font-size:7.6px;line-height:11px;color:#222;font-weight:700;transform:scaleX(0.988);">code_分類</span>
<div class="b" style="left:743.9px;top:228.3px;width:8.0px;height:7.8px;background:#fff;border:1px solid #b4b4b4;border-radius:.5px"></div>
<span class="t" style="left:755.2px;top:226.8px;font-size:7.6px;line-height:11px;color:#444;transform:scaleX(0.981);">code_品目</span>
<div class="b" style="left:743.9px;top:243.2px;width:8.0px;height:7.8px;background:#107c41;border-radius:1px"></div>
<svg style="left:745.400px;top:244.7px" width="5.200" height="4.800" viewBox="0 0 5 4.600" fill="none" stroke="#fff" stroke-width=".9"><path d="M.4 2.300l1.500 1.500L4.600.5"/></svg>
<span class="t" style="left:755.2px;top:241.6px;font-size:7.6px;line-height:11px;color:#222;font-weight:700;transform:scaleX(0.883);">輸送トン数 (千トン)</span>
<svg style="left:897px;top:198.400px" width="7.500" height="7.500" viewBox="0 0 7.500 7.500" fill="none" stroke="#555" stroke-width=".7"><path d="M.4.400h6.700L4.600 3.600v3.300L2.900 5.900V3.600z"/></svg>
<div class="b" style="left:907.0px;top:142.7px;width:9.3px;height:117.5px;background:#f0f0f0"></div>
<svg style="left:908.800px;top:145.800px" width="5" height="3.600" viewBox="0 0 5 3.600"><path d="M0 3.600L2.500 0 5 3.600z" fill="#666"/></svg>
<div class="b" style="left:909.0px;top:152.9px;width:4.7px;height:97.0px;background:#666;border-radius:1px"></div>
<svg style="left:908.800px;top:254.400px" width="5" height="3.600" viewBox="0 0 5 3.600"><path d="M0 0l2.500 3.600L5 0z" fill="#666"/></svg>
<div class="b" style="left:721.0px;top:270.8px;width:196.3px;height:1.0px;background:#e2e2e2"></div>
<span class="t" style="left:723.5px;top:273.0px;font-size:7.8px;line-height:11px;color:#333;transform:scaleX(0.691);">次のボックス間でフィールドをドラッグしてください:</span>
<svg style="left:725.300px;top:295px" width="6.800" height="6.400" viewBox="0 0 5.600 5.600" preserveAspectRatio="none"><path d="M0 0h5.600L3.500 2.600v3L2.100 4.800V2.600z" fill="#777"/></svg>
<span class="t" style="left:736.1px;top:292.7px;font-size:7.8px;line-height:11px;color:#333;transform:scaleX(0.644);">フィルター</span>
<svg style="left:824.800px;top:295.600px" width="4.600" height="5.400" viewBox="0 0 4.600 5.400" fill="none" stroke="#999" stroke-width="1"><path d="M.8 0v5.400M2.300 0v5.400M3.800 0v5.400"/></svg>
<span class="t" style="left:834.5px;top:292.7px;font-size:7.8px;line-height:11px;color:#333;transform:scaleX(0.968);">凡例 (系列)</span>
<div class="b" style="left:722.9px;top:305.6px;width:93.1px;height:59.5px;background:#fff"></div>
<div class="b" style="left:821.3px;top:305.6px;width:96.0px;height:59.5px;background:#fff"></div>
<div class="b" style="left:819.2px;top:294.0px;width:1.0px;height:150.0px;background:#d9d9d9"></div>
<div class="b" style="left:721.0px;top:367.7px;width:196.3px;height:1.0px;background:#d9d9d9"></div>
<div class="b" style="left:821.5px;top:306.4px;width:95.1px;height:12.4px;background:#fff;border:1px solid #dedede;border-radius:1.500px"></div><span class="t" style="left:826.2px;top:307.3px;font-size:7.8px;line-height:11px;color:#333;transform:scaleX(0.923);">輸送機関</span><svg style="left:907.1px;top:311.3px" width="4" height="3" viewBox="0 0 4 3" fill="none" stroke="#444" stroke-width=".8"><path d="M.3.400l1.700 1.800L3.700.4"/></svg>
<div class="b" style="left:821.5px;top:320.9px;width:95.1px;height:12.4px;background:#fff;border:1px solid #dedede;border-radius:1.500px"></div><span class="t" style="left:826.2px;top:321.8px;font-size:7.8px;line-height:11px;color:#333;transform:scaleX(0.983);">code_分類</span><svg style="left:907.1px;top:325.8px" width="4" height="3" viewBox="0 0 4 3" fill="none" stroke="#444" stroke-width=".8"><path d="M.3.400l1.700 1.800L3.700.4"/></svg>
<svg style="left:725.800px;top:375.400px" width="5.600" height="4.600" viewBox="0 0 5.600 4.600" fill="none" stroke="#999" stroke-width="1"><path d="M0 .8h5.600M0 2.300h5.600M0 3.800h5.600"/></svg>
<span class="t" style="left:736.1px;top:372.2px;font-size:7.8px;line-height:11px;color:#333;transform:scaleX(0.975);">軸 (分類項目)</span>
<span class="t" style="left:824.5px;top:371.0px;font-size:9.5px;line-height:13px;color:#555;transform:scaleX(1.049);font-family:'Liberation Serif',serif;">Σ</span>
<span class="t" style="left:834.5px;top:372.2px;font-size:7.8px;line-height:11px;color:#333;transform:scaleX(0.898);">値</span>
<div class="b" style="left:723.0px;top:385.8px;width:92.9px;height:58.1px;background:#fff"></div>
<div class="b" style="left:820.5px;top:385.8px;width:96.5px;height:58.1px;background:#fff"></div>
<div class="b" style="left:723.3px;top:385.9px;width:92.3px;height:12.7px;background:#fff;border:1px solid #dedede;border-radius:1.500px"></div><span class="t" style="left:728.4px;top:386.9px;font-size:7.8px;line-height:11px;color:#333;transform:scaleX(0.898);">年度</span><svg style="left:806.1px;top:390.9px" width="4" height="3" viewBox="0 0 4 3" fill="none" stroke="#444" stroke-width=".8"><path d="M.3.400l1.700 1.800L3.700.4"/></svg>
<div class="b" style="left:821.2px;top:385.9px;width:95.3px;height:12.7px;background:#fff;border:1px solid #dedede;border-radius:1.500px"></div><span class="t" style="left:826.1px;top:386.9px;font-size:7.8px;line-height:11px;color:#333;transform:scaleX(0.914);">合計 / 輸送トン数 (千ト...</span><svg style="left:907.0px;top:390.9px" width="4" height="3" viewBox="0 0 4 3" fill="none" stroke="#444" stroke-width=".8"><path d="M.3.400l1.700 1.800L3.700.4"/></svg>
<div class="b" style="left:724.5px;top:460.1px;width:8.0px;height:8.0px;background:#fff;border:1px solid #b0b0b0;border-radius:1px"></div>
<span class="t" style="left:736.6px;top:459.0px;font-size:8px;line-height:11px;color:#333;transform:scaleX(0.745);">レイアウトの更新を保留する</span>
<div class="b" style="left:896.2px;top:456.8px;width:20.7px;height:13.9px;background:#f3f3f3;border:1px solid #e0e0e0;border-radius:1.500px"></div>
<span class="t" style="left:900.0px;top:458.9px;font-size:7.8px;line-height:11px;color:#b4b4b4;transform:scaleX(0.936);">更新</span>
<div class="b" style="left:0.0px;top:457.8px;width:713.0px;height:19.2px;background:#f0f0f0"></div>
<svg style="left:15.500px;top:463.300px" width="4" height="7" viewBox="0 0 4 7" fill="none" stroke="#a0a0a0" stroke-width=".9"><path d="M3.600.4L.5 3.500l3.100 3.100"/></svg>
<svg style="left:34.600px;top:463.300px" width="4" height="7" viewBox="0 0 4 7" fill="none" stroke="#a0a0a0" stroke-width=".9"><path d="M.4.400l3.100 3.100L.4 6.600"/></svg>
<span class="t" style="left:73.5px;top:459.7px;font-size:10.5px;line-height:15px;color:#333;transform:scaleX(0.856);">data</span>
<div class="b" style="left:99.3px;top:461.0px;width:1.0px;height:13.0px;background:#cfcfcf"></div>
<div class="b" style="left:102.6px;top:457.8px;width:32.4px;height:18.0px;background:#fff;border-radius:0 0 3px 3px"></div>
<span class="t" style="left:108.6px;top:458.3px;font-size:10.5px;line-height:15px;color:#2a2a2a;transform:scaleX(0.901);">pivot</span>
<div class="b" style="left:109.0px;top:472.0px;width:20.0px;height:1.4px;background:#107c41"></div>
<div class="b" style="left:137.0px;top:461.0px;width:1.0px;height:13.0px;background:#cfcfcf"></div>
<svg style="left:161.800px;top:463.200px" width="7.400" height="7.400" viewBox="0 0 7.400 7.400" fill="none" stroke="#444" stroke-width=".9"><path d="M3.700 0v7.400M0 3.700h7.400"/></svg>
<div class="b" style="left:429.5px;top:464.5px;width:1.1px;height:1.1px;background:#666"></div>
<div class="b" style="left:429.5px;top:466.7px;width:1.1px;height:1.1px;background:#666"></div>
<div class="b" style="left:429.5px;top:468.9px;width:1.1px;height:1.1px;background:#666"></div>
<svg style="left:443px;top:464.500px" width="3.600" height="5.400" viewBox="0 0 3.600 5.400"><path d="M3.600 0L0 2.700l3.600 2.700z" fill="#555"/></svg>
<div class="b" style="left:450.2px;top:464.9px;width:227.5px;height:4.7px;background:#6c6c6c;border-radius:2.400px"></div>
<svg style="left:695px;top:464.500px" width="3.600" height="5.400" viewBox="0 0 3.600 5.400"><path d="M0 0l3.600 2.700L0 5.400z" fill="#555"/></svg>
</div>
</body></html>
